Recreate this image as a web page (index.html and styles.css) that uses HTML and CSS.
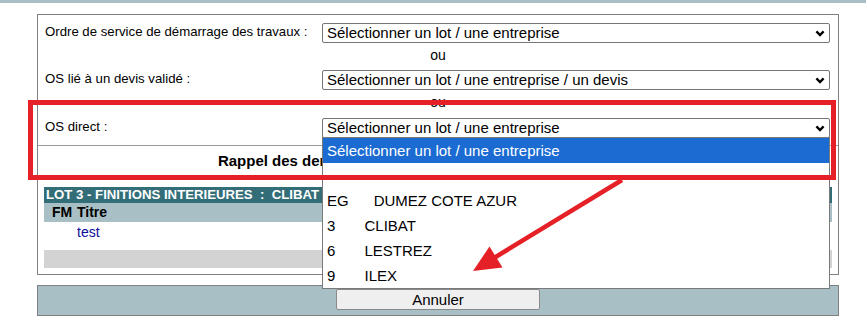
FILE: index.html
```html
<!DOCTYPE html>
<html lang="fr">
<head>
<meta charset="utf-8">
<title>Ordre de service</title>
<link rel="stylesheet" href="styles.css">
</head>
<body>
<div class="topbar"></div>
<div class="panel">
  <div class="form">
    <div class="row">
      <label class="lbl">Ordre de service de démarrage des travaux :</label>
      <select class="sel"><option>Sélectionner un lot / une entreprise</option></select>
    </div>
    <div class="ou ou1">ou</div>
    <div class="row">
      <label class="lbl">OS lié à un devis validé :</label>
      <select class="sel"><option>Sélectionner un lot / une entreprise / un devis</option></select>
    </div>
    <div class="ou ou2">ou</div>
    <div class="row">
      <label class="lbl">OS direct :</label>
      <select class="sel"><option>Sélectionner un lot / une entreprise</option></select>
    </div>
  </div>
  <div class="rappel">Rappel des derniers ordres de service émis pour ce chantier :</div>
  <div class="lots">
    <div class="lot-title">LOT 3 - FINITIONS INTERIEURES &nbsp;:&nbsp; CLIBAT</div>
    <div class="lot-head"><span class="c-fm">FM</span><span>Titre</span></div>
    <div class="lot-row"><span class="c-fm"></span><a class="lnk">test</a></div>
    <div class="lot-foot"></div>
  </div>
</div>
<div class="footer">
  <button class="btn">Annuler</button>
</div>

<div class="dropdown">
  <div class="opt opt-on">Sélectionner un lot / une entreprise</div>
  <div class="opt"></div>
  <div class="opt">EG&nbsp;&nbsp;&nbsp;&nbsp;&nbsp;&nbsp;DUMEZ COTE AZUR</div>
  <div class="opt">3&nbsp;&nbsp;&nbsp;&nbsp;&nbsp;&nbsp;&nbsp;CLIBAT</div>
  <div class="opt">6&nbsp;&nbsp;&nbsp;&nbsp;&nbsp;&nbsp;&nbsp;LESTREZ</div>
  <div class="opt">9&nbsp;&nbsp;&nbsp;&nbsp;&nbsp;&nbsp;&nbsp;ILEX</div>
</div>

<svg class="annot" width="866" height="332" viewBox="0 0 866 332">
  <rect x="30.5" y="102.5" width="803" height="75" fill="none" stroke="#e52026" stroke-width="5"/>
  <line x1="622" y1="180" x2="494" y2="258" stroke="#e52026" stroke-width="4.5"/>
  <polygon points="473,271 489.5,246.5 502.5,267.5" fill="#e52026"/>
</svg>
</body>
</html>
```
FILE: styles.css
```css
html, body {
  margin: 0;
  padding: 0;
  background: #ffffff;
}
body {
  position: relative;
  width: 866px;
  height: 332px;
  overflow: hidden;
  font-family: "Liberation Sans", Arial, sans-serif;
  color: #000;
}
.topbar {
  height: 3px;
  background: #a9bfc6;
}
.panel {
  margin: 11px 0 0 37px;
  width: 800px;
  height: 259px;
  border: 1px solid #808080;
  display: flex;
  flex-direction: column;
}
.form {
  padding: 8px 0 0 7px;
  border-bottom: 1px solid #9a9a9a;
  height: 131px;
  box-sizing: border-box;
  flex: none;
}
.row {
  display: grid;
  grid-template-columns: 277px 508px;
  height: 20px;
}
.lbl {
  font-size: 13.2px;
  line-height: 16px;
  padding-top: 1px;
  white-space: nowrap;
}
.sel {
  -webkit-appearance: none;
  appearance: none;
  font-family: "Liberation Sans", Arial, sans-serif;
  font-size: 15px;
  height: 20px;
  width: 508px;
  margin: 0;
  padding: 0 0 0 4px;
  border: 1px solid #767676;
  border-radius: 2px;
  background: #fff url("data:image/svg+xml;utf8,<svg xmlns='http://www.w3.org/2000/svg' width='10' height='7' viewBox='0 0 10 7'><path d='M1.4 1.4 L5 5 L8.6 1.4' fill='none' stroke='black' stroke-width='2.3'/></svg>") no-repeat right 4px center;
  color: #000;
  line-height: 18px;
}
.ou {
  font-size: 14px;
  text-align: center;
  padding-right: 7px;
  line-height: 16px;
}
.ou1 { height: 27px; padding-top: 4px; box-sizing: border-box; }
.ou2 { height: 28px; padding-top: 4px; box-sizing: border-box; }
.rappel {
  font-size: 15px;
  font-weight: bold;
  text-align: center;
  height: 41px;
  line-height: 17px;
  padding-top: 6px;
  box-sizing: border-box;
  flex: none;
  white-space: nowrap;
}
.lots {
  margin: 0 6px;
}
.lot-title {
  height: 16px;
  background: #336e78;
  color: #fff;
  font-size: 13.2px;
  font-weight: bold;
  line-height: 16px;
  padding-left: 2px;
  white-space: nowrap;
}
.lot-head {
  height: 19px;
  background: #a9bfc6;
  font-size: 14px;
  font-weight: bold;
  line-height: 19px;
  display: flex;
}
.c-fm {
  width: 33px;
  padding-left: 8px;
  box-sizing: border-box;
}
.lot-row {
  height: 28px;
  font-size: 14px;
  line-height: 20px;
  display: flex;
}
.lnk {
  color: #0c0c9c;
}
.lot-foot {
  height: 18px;
  background: #d3d3d3;
}
.footer {
  margin: 10px 0 0 37px;
  width: 800px;
  height: 26px;
  border: 1px solid #808080;
  background: #a9bfc6;
  display: flex;
  justify-content: center;
  align-items: flex-start;
  padding-top: 3px;
}
.btn {
  width: 204px;
  height: 21px;
  margin: 0;
  padding: 0;
  font-family: "Liberation Sans", Arial, sans-serif;
  font-size: 15px;
  color: #000;
  background: #efefef;
  border: 1px solid #8a8a8a;
  border-radius: 2px;
  line-height: 19px;
}
.dropdown {
  position: absolute;
  left: 322px;
  top: 137px;
  width: 506px;
  border: 1px solid #7a7a7a;
  background: #fff;
  font-size: 15px;
}
.opt {
  height: 25px;
  line-height: 25px;
  padding-left: 4px;
  white-space: nowrap;
}
.opt-on {
  background: #1b6bd3;
  color: #fff;
}
.annot {
  position: absolute;
  left: 0;
  top: 0;
  pointer-events: none;
}
```
